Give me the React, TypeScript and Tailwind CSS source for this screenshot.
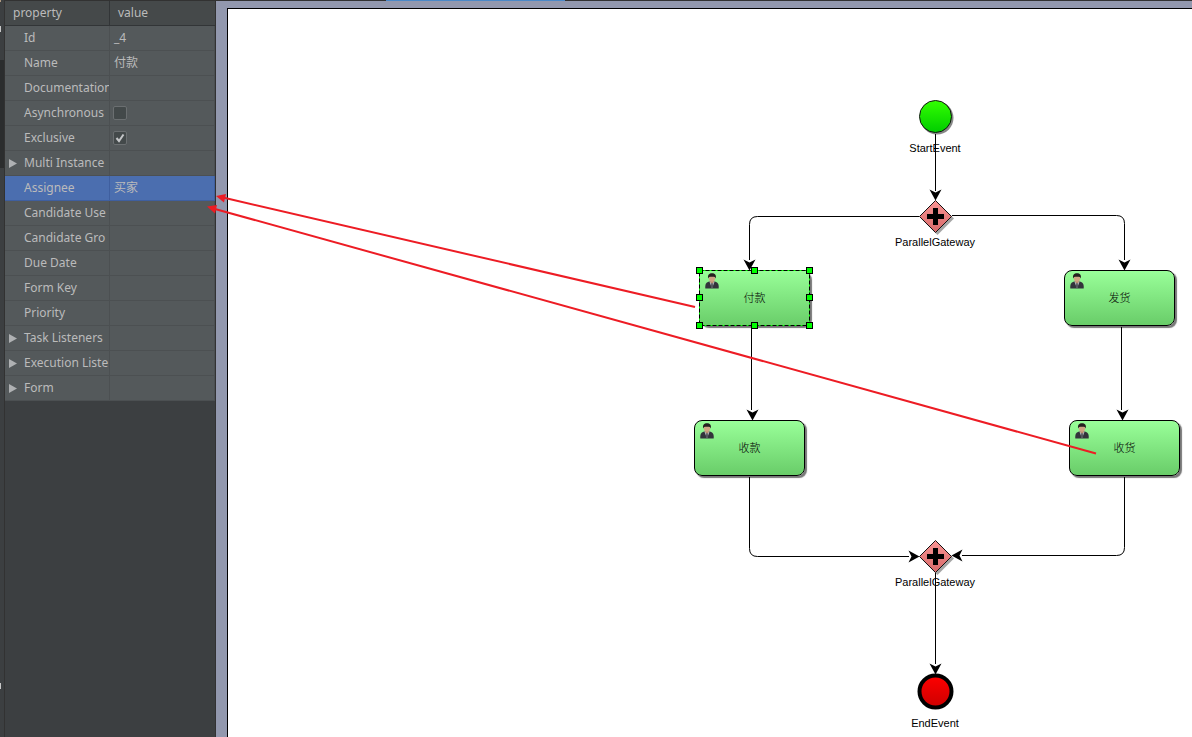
import { useState } from "react";

type Property = {
  name: string;
  value?: string;
  flag?: boolean;
  expandable?: boolean;
  selected?: boolean;
};

const properties: Property[] = [
  { name: "Id", value: "_4" },
  { name: "Name", value: "付款" },
  { name: "Documentation" },
  { name: "Asynchronous", flag: false },
  { name: "Exclusive", flag: true },
  { name: "Multi Instance", expandable: true },
  { name: "Assignee", value: "买家", selected: true },
  { name: "Candidate Use" },
  { name: "Candidate Gro" },
  { name: "Due Date" },
  { name: "Form Key" },
  { name: "Priority" },
  { name: "Task Listeners", expandable: true },
  { name: "Execution Liste", expandable: true },
  { name: "Form", expandable: true },
];

// Diagram coordinates are measured from the canvas's top left corner.
const tasks = [
  { x: 471, y: 261, label: "付款", selected: true },
  { x: 836, y: 261, label: "发货", selected: false },
  { x: 466, y: 411, label: "收款", selected: false },
  { x: 841, y: 411, label: "收货", selected: false },
];

const captions = [
  { x: 707, y: 131, text: "StartEvent" },
  { x: 707, y: 225, text: "ParallelGateway" },
  { x: 707, y: 565, text: "ParallelGateway" },
  { x: 707, y: 706, text: "EndEvent" },
];

const edges = [
  "M707.5 125V182",
  "M691 207.5H529.5Q521.5 207.5 521.5 215.5V251",
  "M724 206.5H888.5Q896.5 206.5 896.5 214.5V251",
  "M523.5 318V401",
  "M893.5 318V401",
  "M521.5 468V539.5Q521.5 547.5 529.5 547.5H681",
  "M896.5 468V538.5Q896.5 546.5 888.5 546.5H734",
  "M707.5 564V655",
];

const heads = [
  { x: 707.5, y: 191.5, turn: 0 },
  { x: 521.5, y: 261.5, turn: 0 },
  { x: 896.5, y: 261.5, turn: 0 },
  { x: 524.5, y: 411.5, turn: 0 },
  { x: 894.5, y: 411.5, turn: 0 },
  { x: 691.5, y: 547.5, turn: -90 },
  { x: 723.5, y: 546.5, turn: 90 },
  { x: 707.5, y: 665.5, turn: 0 },
];

function PropertyRow({ item }: { item: Property }) {
  const [checked, setChecked] = useState(item.flag ?? false);
  const id = "prop-" + item.name.toLowerCase().replace(/ /g, "-");
  const line = item.selected ? "border-[#3f5f9f]" : "border-[#4c5052]";
  return (
    <tr className={item.selected ? "bg-[#4b6eaf]" : "bg-[#54595b]"}>
      <th scope="row" className={`h-[25px] border-r border-b p-0 text-left font-normal ${line}`}>
        <div className="flex items-center overflow-hidden whitespace-nowrap">
          <span className="flex w-[19px] shrink-0 pl-1">
            {item.expandable && (
              <button type="button" aria-label={`Expand ${item.name}`}>
                <svg width="8" height="9" viewBox="0 0 8 9" className="block">
                  <path d="M0 0L8 4.5L0 9Z" fill="#afb1b3" />
                </svg>
              </button>
            )}
          </span>
          {item.flag === undefined ? item.name : <label htmlFor={id}>{item.name}</label>}
        </div>
      </th>
      <td className={`border-r border-b py-0 pr-0 pl-1 ${line}`}>
        {item.flag === undefined ? (
          item.value
        ) : (
          <span className="-ml-px grid size-[14px]">
            <input
              id={id}
              type="checkbox"
              checked={checked}
              onChange={(e) => setChecked(e.target.checked)}
              className="col-start-1 row-start-1 size-[14px] appearance-none rounded-[2px] border border-[#6b6f71] bg-[#43494a]"
            />
            {checked && (
              <svg viewBox="0 0 14 14" className="pointer-events-none col-start-1 row-start-1 size-[14px]">
                <path d="M3.5 7L6 10L10.5 3.5" fill="none" stroke="#c4c6c8" strokeWidth="2" />
              </svg>
            )}
          </span>
        )}
      </td>
    </tr>
  );
}

function UserIcon() {
  return (
    <svg width="14" height="16" viewBox="0 0 14 16" className="block">
      <path d="M0.3 15.5C0 10.8 1.2 9.4 4.6 8.6H9.4C12.8 9.4 14 10.8 13.7 15.5Z" fill="#33343b" />
      <path d="M4.4 8.6L7 15.5L9.6 8.6Z" fill="#b9bbc2" />
      <path d="M6.3 10H7.7L8.2 14L7 15.6L5.8 14Z" fill="#55565e" />
      <path d="M5.3 7.5H8.7V9.2L7 10.6L5.3 9.2Z" fill="#b98a68" />
      <ellipse cx="7" cy="5.2" rx="3.1" ry="3.6" fill="#d0a585" />
      <path d="M3.2 5.5C2.4 1.6 4.2 0.2 7 0.2S11.6 1.6 10.8 5.5L9.9 3.9C8.4 3.6 5.6 3.6 4.1 3.9Z" fill="#25211f" />
    </svg>
  );
}

function Task({ x, y, label, selected }: (typeof tasks)[number]) {
  return (
    <div
      className={`absolute flex h-14 w-[111px] items-center justify-center rounded-lg bg-linear-to-b from-[#99ff99] to-[#69cd69] text-[11px] font-light shadow-[2px_2px_1px_#777777] ${
        selected ? "" : "border border-black"
      }`}
      style={{ left: x, top: y }}
    >
      <span className={selected ? "absolute top-[3px] left-1.5" : "absolute top-0.5 left-[5px]"}>
        <UserIcon />
      </span>
      <span>{label}</span>
    </div>
  );
}

function Gateway({ y }: { y: number }) {
  return (
    <g>
      <path d={`M709.5 ${y - 14}L726 ${y + 2}L709.5 ${y + 18.5}L693 ${y + 2}Z`} fill="#888888" opacity="0.75" />
      <path d={`M707.5 ${y - 16}L723.5 ${y}L707.5 ${y + 16}L691.5 ${y}Z`} fill="url(#gate)" stroke="#111111" />
      <path d={`M707.5 ${y - 8.5}V${y + 8.5}M699 ${y}H716`} stroke="#000000" strokeWidth="5" />
    </g>
  );
}

function Diagram() {
  return (
    <div className="relative flex-1 border-t border-l border-black bg-white font-['Liberation_Sans','Noto_Sans_CJK_SC',sans-serif] text-black">
      {captions.map((c) => (
        <span
          key={c.y}
          className="absolute -translate-x-1/2 text-[11px] leading-4 whitespace-nowrap"
          style={{ left: c.x, top: c.y }}
        >
          {c.text}
        </span>
      ))}
      {tasks.map((t) => (
        <Task key={t.label} {...t} />
      ))}
      <svg width="964" height="728" viewBox="0 0 964 728" className="pointer-events-none absolute top-0 left-0 overflow-visible">
        <defs>
          <linearGradient id="start" x1="0" y1="0" x2="0" y2="1">
            <stop offset="0" stopColor="#33ff00" />
            <stop offset="1" stopColor="#00cc00" />
          </linearGradient>
          <linearGradient id="end" x1="0" y1="0" x2="0" y2="1">
            <stop offset="0" stopColor="#ff0000" />
            <stop offset="1" stopColor="#cc0000" />
          </linearGradient>
          <linearGradient id="gate" x1="0" y1="0" x2="0" y2="1">
            <stop offset="0" stopColor="#f99494" />
            <stop offset="1" stopColor="#d86a6a" />
          </linearGradient>
        </defs>
        <circle cx="709" cy="109" r="16.5" fill="#888888" />
        <circle cx="707.5" cy="107.5" r="16" fill="url(#start)" stroke="#111111" />
        <circle cx="707.5" cy="682.5" r="16" fill="url(#end)" stroke="#000000" strokeWidth="4" />
        <Gateway y={207.5} />
        <Gateway y={547.5} />
        {edges.map((d) => (
          <path key={d} d={d} fill="none" stroke="#000000" />
        ))}
        {heads.map((h) => (
          <path
            key={`${h.x}-${h.y}`}
            d="M0 0L-6 -11L0 -8L6 -11Z"
            transform={`translate(${h.x} ${h.y}) rotate(${h.turn})`}
          />
        ))}
        <rect x="471.5" y="261.5" width="110" height="55" fill="none" stroke="#00ff00" />
        <rect x="471.5" y="261.5" width="110" height="55" fill="none" stroke="#000000" strokeDasharray="4 2" />
        {[261.5, 288.5, 316.5].map((y) =>
          [471.5, 526.5, 581.5]
            .filter((x) => !(x === 526.5 && y === 288.5))
            .map((x) => (
              <rect key={`${x}-${y}`} x={x - 3} y={y - 3} width="6" height="6" fill="#00ff00" stroke="#000000" />
            ))
        )}
        <g stroke="#ed1c24" strokeWidth="2" fill="#ed1c24">
          <path d="M467 298L-5 188.5" />
          <path d="M868 444.5L-13 200" />
          <path stroke="none" d="M-12 187L-2 185L-4 193.4Z" />
          <path stroke="none" d="M-21 197.5L-11 196L-13 204.4Z" />
        </g>
      </svg>
    </div>
  );
}

export default function App() {
  return (
    <div className="flex h-screen overflow-hidden bg-[#3c3f41] font-['Noto_Sans','Noto_Sans_CJK_SC',sans-serif] text-xs/6 text-[#bbbbbb]">
      <div className="flex w-[5px] shrink-0 flex-col border-r border-[#323232]">
        <div className="h-0.5 w-px bg-[#b09a80]" />
        <div className="mt-6 h-1.5 w-px bg-[#c8c8c8]" />
        <div className="mt-7 h-27 bg-[#2b2d2e]" />
        <div className="mt-auto mb-12 h-1.5 w-px bg-[#c8c8c8]" />
      </div>
      <aside className="w-[211px] shrink-0 border-t border-r border-[#323232]">
        <table className="w-full table-fixed border-separate border-spacing-0">
          <thead>
            <tr className="bg-[#45494a]">
              <th scope="col" className="h-[25px] border-r border-b border-[#323537] py-0 pr-0 pl-2 text-left font-normal">
                property
              </th>
              <th scope="col" className="border-b border-[#323537] py-0 pr-0 pl-2 text-left font-normal">
                value
              </th>
            </tr>
          </thead>
          <tbody>
            {properties.map((p) => (
              <PropertyRow key={p.name} item={p} />
            ))}
          </tbody>
        </table>
      </aside>
      <main className="flex min-w-0 flex-1 flex-col bg-[#9298ae]">
        <div className="flex h-px shrink-0 bg-[#323232]">
          <div className="ml-[170px] w-[179px] bg-[#4a88c7]" />
        </div>
        <div className="flex flex-1 pt-[7px] pl-[11px]">
          <Diagram />
        </div>
      </main>
    </div>
  );
}
